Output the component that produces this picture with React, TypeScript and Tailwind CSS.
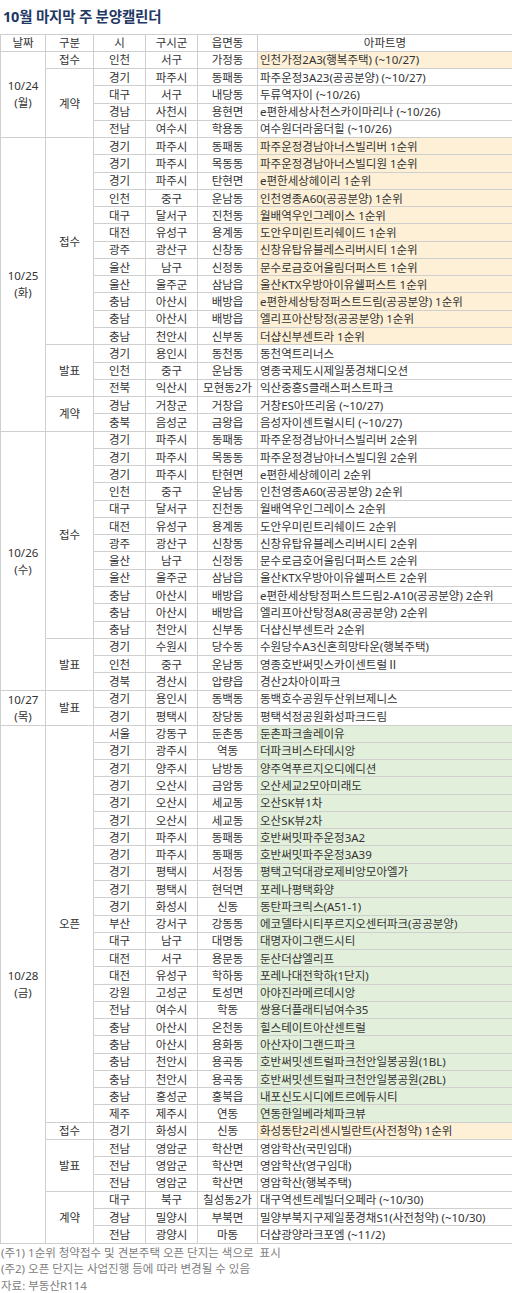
import React from 'react';

type Hl = 'y' | 'g' | undefined;

interface Row {
  si: string;
  gu: string;
  dong: string;
  name: string;
}

interface Section {
  kind: string;
  hl?: Hl;
  rows: Row[];
}

interface Group {
  date: string;
  day: string;
  sections: Section[];
}

const r = (si: string, gu: string, dong: string, name: string): Row => ({ si, gu, dong, name });

const junsuList = (rank: string, last: boolean): Row[] => [
  r('경기', '파주시', '동패동', `파주운정경남아너스빌리버 ${rank}`),
  r('경기', '파주시', '목동동', `파주운정경남아너스빌디원 ${rank}`),
  r('경기', '파주시', '탄현면', `e편한세상헤이리 ${rank}`),
  r('인천', '중구', '운남동', `인천영종A60(공공분양) ${rank}`),
  r('대구', '달서구', '진천동', `월배역우인그레이스 ${rank}`),
  r('대전', '유성구', '용계동', `도안우미린트리쉐이드 ${rank}`),
  r('광주', '광산구', '신창동', `신창유탑유블레스리버시티 ${rank}`),
  r('울산', '남구', '신정동', `문수로금호어울림더퍼스트 ${rank}`),
  r('울산', '울주군', '삼남읍', `울산KTX우방아이유쉘퍼스트 ${rank}`),
  r('충남', '아산시', '배방읍', last ? `e편한세상탕정퍼스트드림2-A10(공공분양) ${rank}` : `e편한세상탕정퍼스트드림(공공분양) ${rank}`),
  r('충남', '아산시', '배방읍', last ? `엘리프아산탕정A8(공공분양) ${rank}` : `엘리프아산탕정(공공분양) ${rank}`),
  r('충남', '천안시', '신부동', `더샵신부센트라 ${rank}`),
];

const groups: Group[] = [
  {
    date: '10/24',
    day: '(월)',
    sections: [
      { kind: '접수', hl: 'y', rows: [r('인천', '서구', '가정동', '인천가정2A3(행복주택) (~10/27)')] },
      {
        kind: '계약',
        rows: [
          r('경기', '파주시', '동패동', '파주운정3A23(공공분양) (~10/27)'),
          r('대구', '서구', '내당동', '두류역자이 (~10/26)'),
          r('경남', '사천시', '용현면', 'e편한세상사천스카이마리나 (~10/26)'),
          r('전남', '여수시', '학용동', '여수원더라움더힐 (~10/26)'),
        ],
      },
    ],
  },
  {
    date: '10/25',
    day: '(화)',
    sections: [
      { kind: '접수', hl: 'y', rows: junsuList('1순위', false) },
      {
        kind: '발표',
        rows: [
          r('경기', '용인시', '동천동', '동천역트리너스'),
          r('인천', '중구', '운남동', '영종국제도시제일풍경채디오션'),
          r('전북', '익산시', '모현동2가', '익산중흥S클래스퍼스트파크'),
        ],
      },
      {
        kind: '계약',
        rows: [
          r('경남', '거창군', '거창읍', '거창ES아뜨리움 (~10/27)'),
          r('충북', '음성군', '금왕읍', '음성자이센트럴시티 (~10/27)'),
        ],
      },
    ],
  },
  {
    date: '10/26',
    day: '(수)',
    sections: [
      { kind: '접수', rows: junsuList('2순위', true) },
      {
        kind: '발표',
        rows: [
          r('경기', '수원시', '당수동', '수원당수A3신혼희망타운(행복주택)'),
          r('인천', '중구', '운남동', '영종호반써밋스카이센트럴Ⅱ'),
          r('경북', '경산시', '압량읍', '경산2차아이파크'),
        ],
      },
    ],
  },
  {
    date: '10/27',
    day: '(목)',
    sections: [
      {
        kind: '발표',
        rows: [
          r('경기', '용인시', '동백동', '동백호수공원두산위브제니스'),
          r('경기', '평택시', '장당동', '평택석정공원화성파크드림'),
        ],
      },
    ],
  },
  {
    date: '10/28',
    day: '(금)',
    sections: [
      {
        kind: '오픈',
        hl: 'g',
        rows: [
          r('서울', '강동구', '둔촌동', '둔촌파크솔레이유'),
          r('경기', '광주시', '역동', '더파크비스타데시앙'),
          r('경기', '양주시', '남방동', '양주역푸르지오디에디션'),
          r('경기', '오산시', '금암동', '오산세교2모아미래도'),
          r('경기', '오산시', '세교동', '오산SK뷰1차'),
          r('경기', '오산시', '세교동', '오산SK뷰2차'),
          r('경기', '파주시', '동패동', '호반써밋파주운정3A2'),
          r('경기', '파주시', '동패동', '호반써밋파주운정3A39'),
          r('경기', '평택시', '서정동', '평택고덕대광로제비앙모아엘가'),
          r('경기', '평택시', '현덕면', '포레나평택화양'),
          r('경기', '화성시', '신동', '동탄파크릭스(A51-1)'),
          r('부산', '강서구', '강동동', '에코델타시티푸르지오센터파크(공공분양)'),
          r('대구', '남구', '대명동', '대명자이그랜드시티'),
          r('대전', '서구', '용문동', '둔산더샵엘리프'),
          r('대전', '유성구', '학하동', '포레나대전학하(1단지)'),
          r('강원', '고성군', '토성면', '아야진라메르데시앙'),
          r('전남', '여수시', '학동', '쌍용더플래티넘여수35'),
          r('충남', '아산시', '온천동', '힐스테이트아산센트럴'),
          r('충남', '아산시', '용화동', '아산자이그랜드파크'),
          r('충남', '천안시', '용곡동', '호반써밋센트럴파크천안일봉공원(1BL)'),
          r('충남', '천안시', '용곡동', '호반써밋센트럴파크천안일봉공원(2BL)'),
          r('충남', '홍성군', '홍북읍', '내포신도시디에트르에듀시티'),
          r('제주', '제주시', '연동', '연동한일베라체파크뷰'),
        ],
      },
      { kind: '접수', hl: 'y', rows: [r('경기', '화성시', '신동', '화성동탄2리센시빌란트(사전청약) 1순위')] },
      {
        kind: '발표',
        rows: [
          r('전남', '영암군', '학산면', '영암학산(국민임대)'),
          r('전남', '영암군', '학산면', '영암학산(영구임대)'),
          r('전남', '영암군', '학산면', '영암학산(행복주택)'),
        ],
      },
      {
        kind: '계약',
        rows: [
          r('대구', '북구', '칠성동2가', '대구역센트레빌더오페라 (~10/30)'),
          r('경남', '밀양시', '부북면', '밀양부북지구제일풍경채S1(사전청약) (~10/30)'),
          r('전남', '광양시', '마동', '더샵광양라크포엠 (~11/2)'),
        ],
      },
    ],
  },
];

const cell = 'border border-[#cfcfcf] text-center p-0 whitespace-nowrap';

export default function App() {
  return (
    <div className="w-[512px] bg-white text-[#333] font-['Noto_Sans','Noto_Sans_CJK_KR',sans-serif] text-[11.5px]">
      <div className="h-[33.5px] flex items-center pl-[3px]">
        <h1 className="text-[14.5px] font-bold text-[#1f3864] tracking-[-0.2px]">10월 마지막 주 분양캘린더</h1>
      </div>

      <table className="w-[512px] table-fixed border-collapse">
        <colgroup>
          <col className="w-[45px]" />
          <col className="w-[48px]" />
          <col className="w-[52px]" />
          <col className="w-[52px]" />
          <col className="w-[60px]" />
          <col className="w-[255px]" />
        </colgroup>
        <thead>
          <tr className="h-[17.27px] leading-[15px]">
            <th className={`${cell} font-normal`}>날짜</th>
            <th className={`${cell} font-normal`}>구분</th>
            <th className={`${cell} font-normal`}>시</th>
            <th className={`${cell} font-normal`}>구시군</th>
            <th className={`${cell} font-normal`}>읍면동</th>
            <th className={`${cell} font-normal`}>아파트명</th>
          </tr>
        </thead>
        <tbody>
          {groups.map((g) => {
            const total = g.sections.reduce((n, s) => n + s.rows.length, 0);
            return g.sections.map((s, si) =>
              s.rows.map((row, ri) => (
                <tr key={`${g.date}-${si}-${ri}`} className="h-[17.27px] leading-[15px]">
                  {si === 0 && ri === 0 && (
                    <td rowSpan={total} className={`${cell} leading-[17px]`}>
                      {g.date}
                      <br />
                      {g.day}
                    </td>
                  )}
                  {ri === 0 && (
                    <td rowSpan={s.rows.length} className={cell}>
                      {s.kind}
                    </td>
                  )}
                  <td className={cell}>{row.si}</td>
                  <td className={cell}>{row.gu}</td>
                  <td className={cell}>{row.dong}</td>
                  <td
                    className={`border border-[#cfcfcf] p-0 pl-[2px] text-left whitespace-nowrap ${
                      s.hl === 'y' ? 'bg-[#fdf0d6]' : s.hl === 'g' ? 'bg-[#e2efda]' : ''
                    }`}
                  >
                    {row.name}
                  </td>
                </tr>
              ))
            );
          })}
        </tbody>
      </table>

      <div className="text-[#808080] text-[11.5px] leading-[16.5px] pl-px pt-[1px]">
        <p>(주1) 1순위 청약접수 및 견본주택 오픈 단지는 색으로&nbsp; 표시</p>
        <p>(주2) 오픈 단지는 사업진행 등에 따라 변경될 수 있음</p>
        <p>자료: 부동산R114</p>
      </div>
    </div>
  );
}
